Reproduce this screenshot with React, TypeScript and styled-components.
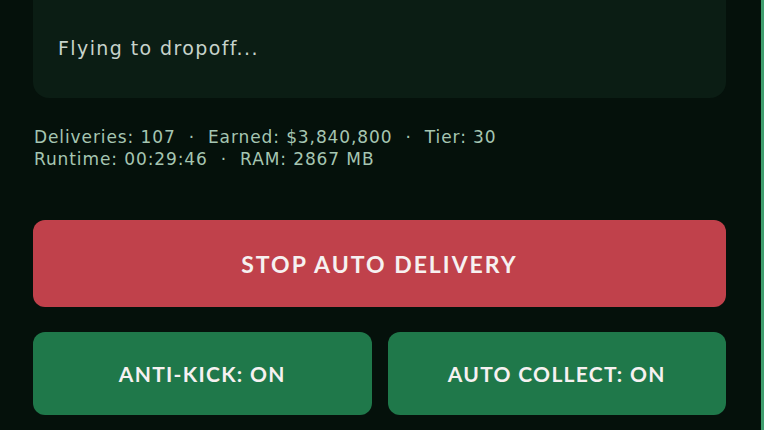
import React from "react";
import styled, { createGlobalStyle } from "styled-components";

const Global = createGlobalStyle`
  html, body { margin: 0; padding: 0; background: #05110b; }
  body { font-family: "DejaVu Sans", "Noto Sans", sans-serif; }
`;

const Panel = styled.div`
  width: 764px;
  height: 430px;
  box-sizing: border-box;
  background: #05110b;
  border-right: 3px solid #3f9e6e;
  padding: 0 35px 0 33px;
  display: flex;
  flex-direction: column;
  overflow: hidden;
`;

const StatusBox = styled.div`
  height: 98px;
  box-sizing: border-box;
  background: #0b1d14;
  border-radius: 0 0 16px 16px;
  display: flex;
  align-items: center;
  padding: 0 25px 2px;
  color: #c7d3cb;
  font-size: 19px;
  letter-spacing: 1.4px;
`;

const Stats = styled.div`
  margin-top: 28px;
  color: #a6c6b2;
  font-size: 17px;
  letter-spacing: 0.9px;
  line-height: 22px;
  padding-left: 1px;
`;

const Dot = styled.span`
  margin: 0 13px;
`;

const ActionButton = styled.button<{ $tone: "red" | "green"; $h: number }>`
  border: none;
  border-radius: 12px;
  height: ${(p) => p.$h}px;
  background: ${(p) => (p.$tone === "red" ? "#c0414b" : "#1f784a")};
  color: #f6f1f1;
  font-family: "Lato", "Noto Sans", sans-serif;
  font-weight: 700;
  font-size: ${(p) => (p.$tone === "red" ? 23 : 21)}px;
  letter-spacing: ${(p) => (p.$tone === "red" ? 2 : 1.3)}px;
  text-transform: uppercase;
  display: flex;
  align-items: center;
  justify-content: center;
  padding: 0;
  cursor: pointer;
`;

const StopWrap = styled.div`
  margin-top: 50px;
  display: flex;
  flex-direction: column;
`;

const Row = styled.div`
  margin-top: 25px;
  display: grid;
  grid-template-columns: 1fr 1fr;
  gap: 16px;
`;

export default function App() {
  return (
    <>
      <Global />
      <Panel>
        <StatusBox>Flying to dropoff...</StatusBox>
        <Stats>
          <div>
            Deliveries: 107<Dot>·</Dot>Earned: $3,840,800<Dot>·</Dot>Tier: 30
          </div>
          <div>
            Runtime: 00:29:46<Dot>·</Dot>RAM: 2867 MB
          </div>
        </Stats>
        <StopWrap>
          <ActionButton $tone="red" $h={87}>Stop Auto Delivery</ActionButton>
        </StopWrap>
        <Row>
          <ActionButton $tone="green" $h={83}>Anti-Kick: ON</ActionButton>
          <ActionButton $tone="green" $h={83}>Auto Collect: ON</ActionButton>
        </Row>
      </Panel>
    </>
  );
}
